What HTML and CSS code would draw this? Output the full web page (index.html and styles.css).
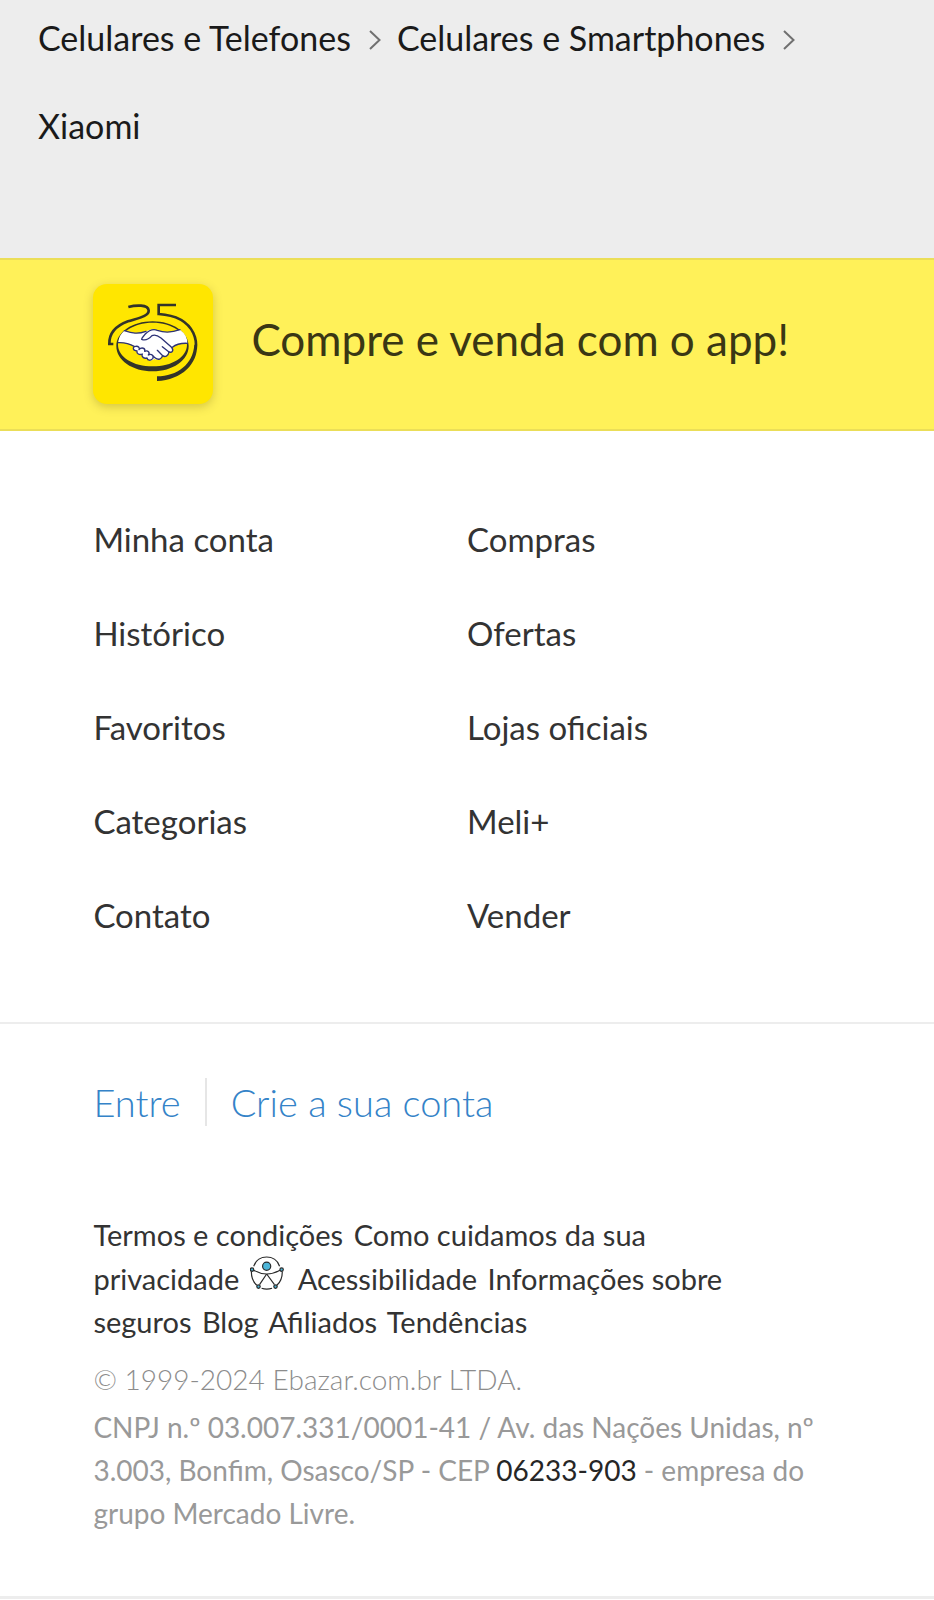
FILE: index.html
```html
<!DOCTYPE html>
<html lang="pt-BR">
<head>
<meta charset="utf-8">
<meta name="viewport" content="width=device-width, initial-scale=1">
<title>Mercado Livre</title>
<link rel="stylesheet" href="styles.css">
</head>
<body>
<nav class="breadcrumb" aria-label="Categorias do produto">
  <ol class="breadcrumb-list">
    <li class="breadcrumb-item"><a href="#">Celulares e Telefones</a><svg class="chevron" viewBox="0 0 12 20" aria-hidden="true"><path d="M1 1l9.500 9L1 19"/></svg></li>
    <li class="breadcrumb-item"><a href="#">Celulares e Smartphones</a><svg class="chevron" viewBox="0 0 12 20" aria-hidden="true"><path d="M1 1l9.500 9L1 19"/></svg></li>
    <li class="breadcrumb-item"><a href="#">Xiaomi</a></li>
  </ol>
</nav>

<a class="app-banner" href="#">
  <svg class="app-logo" viewBox="42 42 360 360" aria-hidden="true">
    <g fill="none" stroke="#33342a">
      <path stroke-width="8" d="M148 111C170 105 207 103 209 121C211 138 178 144 147 154C112 167 90 190 91 222H103"/>
      <path stroke-width="8" d="M291 105H239V132C286 135 325 152 343 189C350 204 353 220 350 238"/>
      <path fill="#33342a" stroke="none" d="M354 222C358 281 308 330 234 333V319C295 318 342 283 346 224Z"/>
      <path fill="#33342a" stroke="none" fill-rule="evenodd" d="M221 154C281 154 329 187 329 228C329 271 281 304 221 304C160 304 112 271 112 228C112 187 160 154 221 154ZM221 158C164 158 117 189 117 224C117 261 163 289 221 289C279 289 324 261 324 224C324 189 278 158 221 158Z"/>
    </g>
    <g fill="#fff" stroke="#2d3277" stroke-width="4" stroke-linejoin="round" stroke-linecap="round">
      <path stroke="none" d="M136 182C160 190 177 193 202 184C212 179 222 177 235 181C260 190 278 188 303 179Q326 196 325 220C304 219 291 224 280 232C285 241 277 250 268 247C266 258 257 262 249 257C244 268 236 271 226 267C218 274 207 271 205 264C196 267 188 261 189 253C180 256 173 250 174 243C163 243 160 233 167 229C149 219 135 217 118 218Q118 197 136 182Z"/>
      <g fill="none">
        <path d="M118 218C136 217 151 221 167 230"/>
        <path d="M136 182C160 190 176 193 201 184M303 179C278 188 260 190 235 181C218 174 207 184 198 193C194 199 188 203 188 208C200 213 211 206 219 197C226 193 237 197 246 204L276 230C287 241 279 249 270 246L250 230"/>
        <path d="M325 220C304 219 291 223 280 232M270 246C268 259 258 262 251 257L235 241M251 257C247 268 238 271 229 264L219 256"/>
      </g>
      <path d="M174 243C160 242 160 230 170 229C179 228 183 234 180 239C188 230 200 235 197 244C207 240 214 248 208 255C218 250 226 258 221 266C215 273 206 272 204 264C195 267 186 260 190 252C181 256 172 251 174 243Z"/>
    </g>
  </svg>
  <span class="app-text">Compre e venda com o app!</span>
</a>

<footer class="footer">
  <nav aria-label="Links do rodapé">
    <ul class="site-links">
      <li><a href="#">Minha conta</a></li>
      <li><a href="#">Compras</a></li>
      <li><a href="#">Histórico</a></li>
      <li><a href="#">Ofertas</a></li>
      <li><a href="#">Favoritos</a></li>
      <li><a href="#">Lojas oficiais</a></li>
      <li><a href="#">Categorias</a></li>
      <li><a href="#">Meli+</a></li>
      <li><a href="#">Contato</a></li>
      <li><a href="#">Vender</a></li>
    </ul>
  </nav>

  <div class="footer-bottom">
    <div class="account">
      <a class="account-link" href="#">Entre</a>
      <a class="account-link" href="#">Crie a sua conta</a>
    </div>
    <p class="legal-links">
      <a href="#">Termos e condições</a>
      <a href="#">Como cuidamos da sua privacidade</a>
      <a href="#"><svg class="access-icon" viewBox="30 50 100 100" aria-hidden="true"><g fill="none" stroke="#292929" stroke-width="3.500"><path d="M41 80C53 44 105 44 117 80M34 96C34 114 40 127 50 136M125 96C125 114 119 127 109 136M64 145Q79 150 95 145"/><path d="M41 92Q79 114 118 92M79 103L58 134M79 103L102 134"/></g><g fill="#4cb5d8" stroke="#292929" stroke-width="3.500"><circle cx="79" cy="80" r="12"/><circle cx="36" cy="90" r="5"/><circle cx="123" cy="90" r="5"/><circle cx="55" cy="140" r="5"/><circle cx="105" cy="140" r="5"/></g></svg>Acessibilidade</a>
      <a href="#">Informações sobre seguros</a>
      <a href="#">Blog</a>
      <a href="#">Afiliados</a>
      <a href="#">Tendências</a>
    </p>
    <p class="copyright">© 1999-2024 Ebazar.com.br LTDA.</p>
    <p class="company">CNPJ n.º 03.007.331/0001-41 / Av. das Nações Unidas, nº 3.003, Bonfim, Osasco/SP - CEP <a href="#">06233-903</a> - empresa do grupo Mercado Livre.</p>
  </div>
</footer>
</body>
</html>
```

FILE: styles.css
```css
* {
  box-sizing: border-box;
}

body {
  margin: 0;
  background: #fff;
  color: #333;
  font-family: Lato, "Open Sans", sans-serif;
  font-size: 33px;
}

a {
  color: inherit;
  text-decoration: none;
}

ol,
ul {
  margin: 0;
  padding: 0;
  list-style: none;
}

.breadcrumb {
  padding: 0 38px 94px;
  background: #ededed;
  color: #1a1a1a;
  font-size: 34px;
  line-height: 76px;
}

.breadcrumb-list {
  display: flex;
  flex-wrap: wrap;
  gap: 12px 16px;
}

.breadcrumb-item {
  display: flex;
  align-items: center;
  gap: 18px;
}

.chevron {
  width: 12px;
  height: 20px;
  margin-top: 4px;
  fill: none;
  stroke: #707070;
  stroke-width: 2;
}

.app-banner {
  display: flex;
  align-items: center;
  gap: 38px;
  padding: 24px 10% 25px;
  border: solid #ebde58;
  border-width: 2px 0;
  background: #fff159;
  color: #3a3714;
}

.app-logo {
  flex: none;
  width: 120px;
  height: 120px;
  border-radius: 14px;
  background: #ffe600;
  box-shadow: 0 3px 10px rgba(90, 80, 0, 0.25);
}

.app-text {
  padding-bottom: 10px;
  font-size: 44px;
  line-height: 50px;
}

.site-links {
  display: grid;
  grid-template-columns: 1fr 1fr;
  padding: 61px 10% 60px;
  border-bottom: 2px solid #ededed;
  line-height: 94px;
}

.footer-bottom {
  padding: 54px 10% 61px;
  border-bottom: 3px solid #ededed;
  font-size: 28px;
  line-height: 43px;
}

.account {
  display: flex;
  font-size: 38px;
  font-weight: 300;
  line-height: 48px;
  color: #3483c8;
}

.account-link + .account-link {
  margin-left: 24px;
  padding-left: 24px;
  border-left: 2px solid #e6e6e6;
}

.legal-links,
.copyright,
.company {
  margin: 0;
}

.legal-links {
  max-width: 90%;
  margin-top: 87px;
  font-size: 29px;
}

.legal-links a {
  margin-right: 3px;
}

.access-icon {
  width: 34px;
  height: 34px;
  margin-right: 14px;
}

.copyright {
  margin-top: 15px;
  font-weight: 300;
  color: #8c8c8c;
}

.company {
  margin-top: 5px;
  color: #999;
}

.company a {
  color: #262626;
}
```
